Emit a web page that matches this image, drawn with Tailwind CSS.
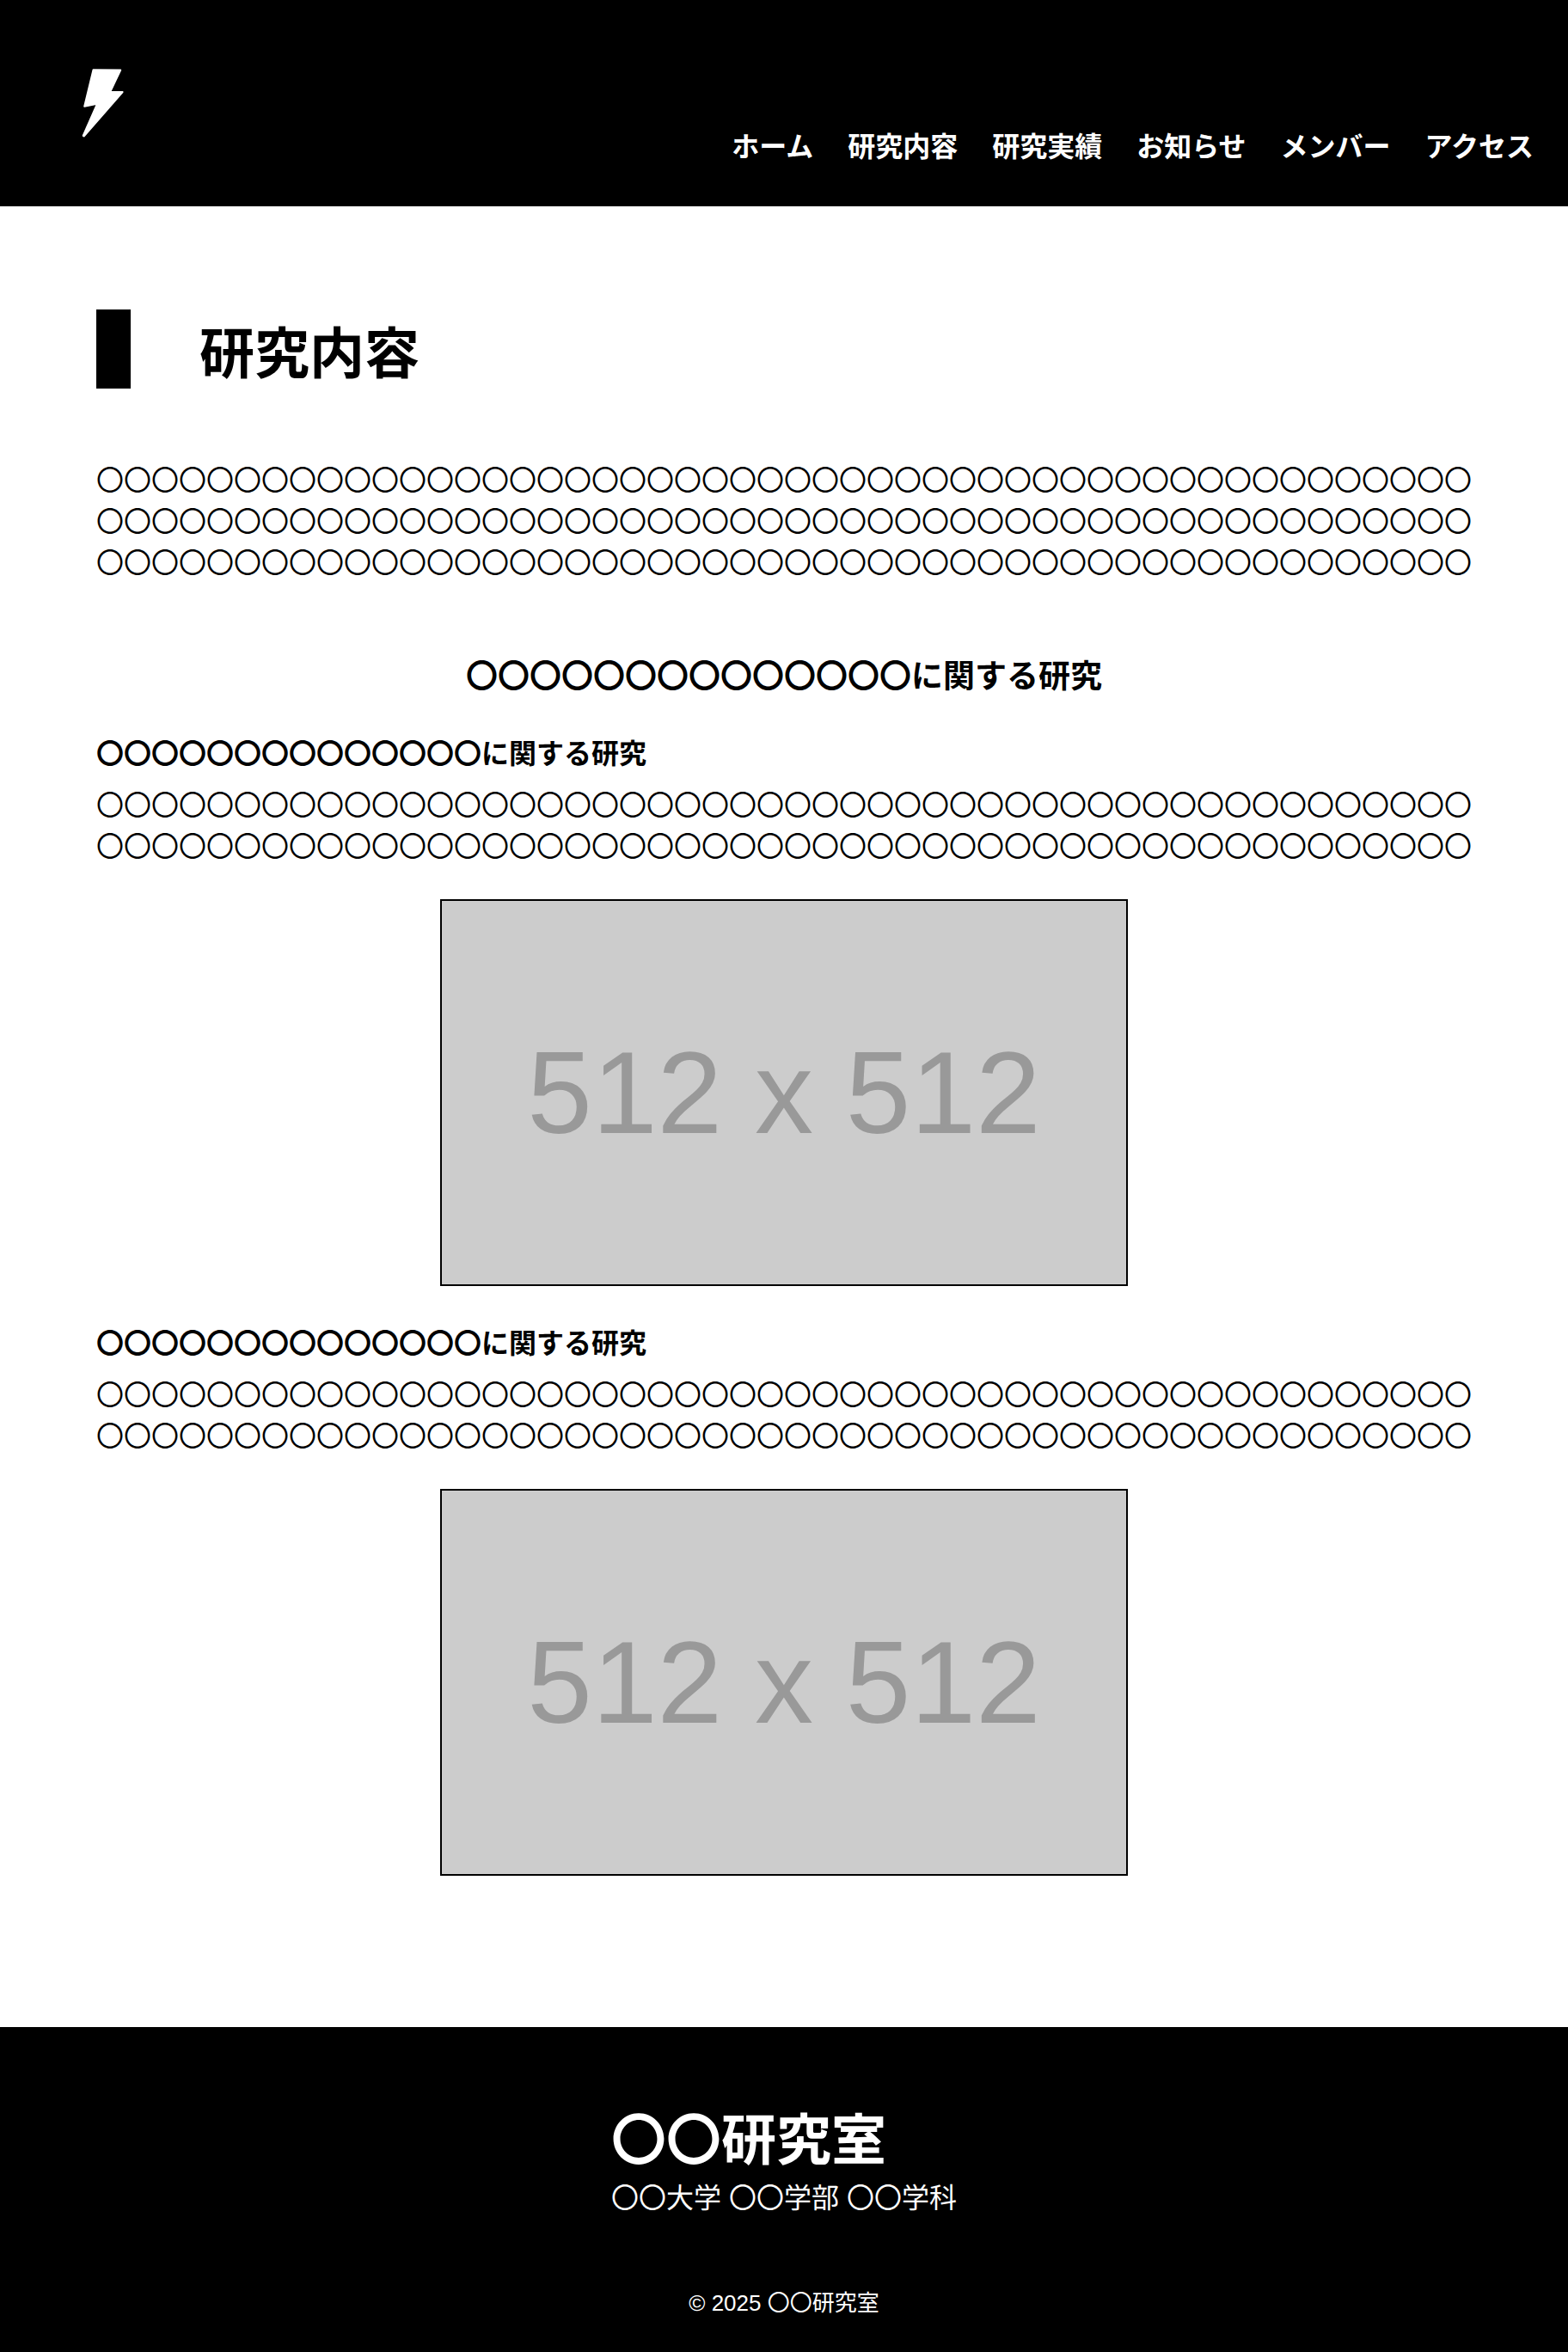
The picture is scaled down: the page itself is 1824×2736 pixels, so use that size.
<!DOCTYPE html>
<html lang="ja">
<head>
<meta charset="utf-8">
<meta name="viewport" content="width=device-width, initial-scale=1">
<title>研究内容 | 〇〇研究室</title>
<script src="https://cdn.jsdelivr.net/npm/@tailwindcss/browser@4"></script>
</head>
<body class="bg-white font-['Noto_Sans_CJK_JP',sans-serif] text-[32px] leading-[48px] text-black">

<header class="flex min-h-60 items-end justify-between bg-black px-10 text-white">
  <a href="#" aria-label="ホーム" class="self-start pt-10">
    <svg class="size-40" viewBox="0 0 160 160" fill="currentColor" stroke="currentColor" stroke-width="2" stroke-linejoin="round" aria-hidden="true">
      <path d="M68.5 41.2 L100.2 41.6 L88.2 66.7 L102.6 67 L57.6 118.5 L56.7 118 L73 80.8 L58.2 83.8 Z"/>
    </svg>
  </a>
  <nav class="pb-12">
    <ul class="flex flex-wrap gap-x-10 font-bold">
      <li><a href="#">ホーム</a></li>
      <li><a href="#">研究内容</a></li>
      <li><a href="#">研究実績</a></li>
      <li><a href="#">お知らせ</a></li>
      <li><a href="#">メンバー</a></li>
      <li><a href="#">アクセス</a></li>
    </ul>
  </nav>
</header>

<main class="mx-auto max-w-[1600px] pt-30 pb-44">
  <h1 class="border-l-40 border-black pl-20 text-[64px] leading-[92px] font-bold">研究内容</h1>
  <p class="mt-20 break-all">〇〇〇〇〇〇〇〇〇〇〇〇〇〇〇〇〇〇〇〇〇〇〇〇〇〇〇〇〇〇〇〇〇〇〇〇〇〇〇〇〇〇〇〇〇〇〇〇〇〇〇〇〇〇〇〇〇〇〇〇〇〇〇〇〇〇〇〇〇〇〇〇〇〇〇〇〇〇〇〇〇〇〇〇〇〇〇〇〇〇〇〇〇〇〇〇〇〇〇〇〇〇〇〇〇〇〇〇〇〇〇〇〇〇〇〇〇〇〇〇〇〇〇〇〇〇〇〇〇〇〇〇〇〇〇〇〇〇〇〇〇〇〇〇〇〇〇〇〇〇</p>

  <section class="mt-20">
    <h2 class="mb-[38px] text-center text-[37px] leading-[56px] font-bold">〇〇〇〇〇〇〇〇〇〇〇〇〇〇に関する研究</h2>
    <div class="flex flex-col gap-10">
      <article>
        <h3 class="font-bold">〇〇〇〇〇〇〇〇〇〇〇〇〇〇に関する研究</h3>
        <p class="mt-3 break-all">〇〇〇〇〇〇〇〇〇〇〇〇〇〇〇〇〇〇〇〇〇〇〇〇〇〇〇〇〇〇〇〇〇〇〇〇〇〇〇〇〇〇〇〇〇〇〇〇〇〇〇〇〇〇〇〇〇〇〇〇〇〇〇〇〇〇〇〇〇〇〇〇〇〇〇〇〇〇〇〇〇〇〇〇〇〇〇〇〇〇〇〇〇〇〇〇〇〇〇〇</p>
        <div class="mx-auto mt-10 flex aspect-video w-1/2 items-center justify-center border-2 border-black bg-[#ccc] font-['Liberation_Sans',sans-serif] text-[136px] leading-none whitespace-nowrap text-[#999]">512 x 512</div>
      </article>
      <article>
        <h3 class="font-bold">〇〇〇〇〇〇〇〇〇〇〇〇〇〇に関する研究</h3>
        <p class="mt-3 break-all">〇〇〇〇〇〇〇〇〇〇〇〇〇〇〇〇〇〇〇〇〇〇〇〇〇〇〇〇〇〇〇〇〇〇〇〇〇〇〇〇〇〇〇〇〇〇〇〇〇〇〇〇〇〇〇〇〇〇〇〇〇〇〇〇〇〇〇〇〇〇〇〇〇〇〇〇〇〇〇〇〇〇〇〇〇〇〇〇〇〇〇〇〇〇〇〇〇〇〇〇</p>
        <div class="mx-auto mt-10 flex aspect-video w-1/2 items-center justify-center border-2 border-black bg-[#ccc] font-['Liberation_Sans',sans-serif] text-[136px] leading-none whitespace-nowrap text-[#999]">512 x 512</div>
      </article>
    </div>
  </section>
</main>

<footer class="flex flex-col items-center bg-black pt-20 pb-9 text-white">
  <div>
    <p class="text-[64px] leading-[92px] font-bold">〇〇研究室</p>
    <p class="font-['Liberation_Sans','Noto_Sans_CJK_JP',sans-serif] leading-[54px]">〇〇大学 〇〇学部 〇〇学科</p>
  </div>
  <small class="mt-[74px] font-['Liberation_Sans','Noto_Sans_CJK_JP',sans-serif] text-[26px] leading-[42px]">© 2025 〇〇研究室</small>
</footer>

</body>
</html>
